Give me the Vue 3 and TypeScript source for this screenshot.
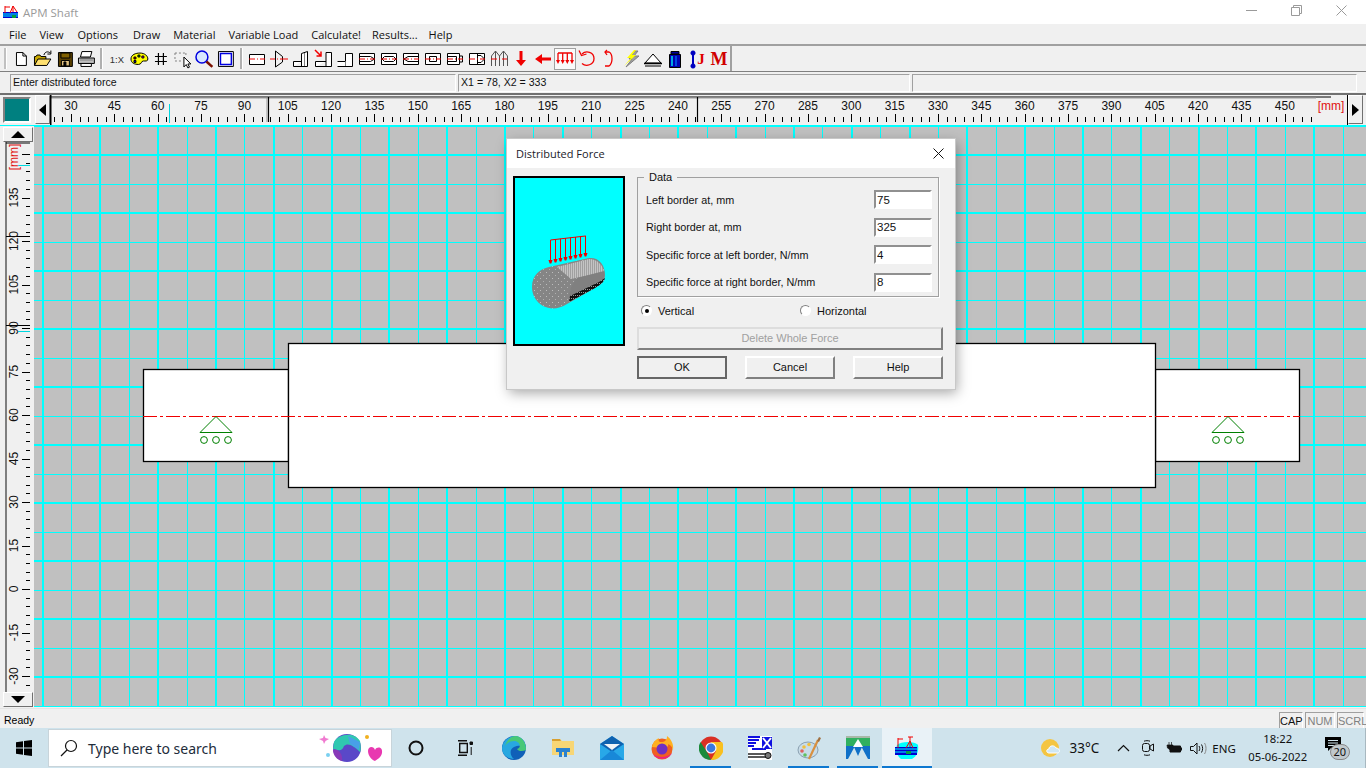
<script setup lang="ts">
type Shape = [string, string?, string?, number?]
interface Tool {
  id: string
  shapes?: Shape[]
  label?: { text: string; color: string; family: string; size: number; x: number; y: number; weight?: string }
  pressed?: boolean
}

const menus = ['File', 'View', 'Options', 'Draw', 'Material', 'Variable Load', 'Calculate!', 'Results...', 'Help']

const K = '#000'
const R = '#f00000'
const G = '#808080'

const fileTools: Tool[] = [
  { id: 'new', shapes: [['M6.5 4.5H13L16.5 8V17.5H6.5Z', K, '#fff'], ['M13 4.5V8H16.5', K]] },
  { id: 'open', shapes: [['M2.5 17.5V8.5H4L5 7H8L9 8.5H14V11', K, '#c8a800'], ['M2.5 17.5L6 11H19L15 17.5Z', K, '#ffe070'], ['M12 7C13 3.5 16 3 18.5 5', K], ['M19 2.5V6H15.5', K]] },
  { id: 'save', shapes: [['M4.5 4.5H18.5V18.5H4.5Z', K, '#5a4000'], ['M7 5H16V10H7Z', K, '#806000'], ['M7.5 12.5H15.5V18H7.5Z', K, '#e0c080'], ['M10 14H12V18H10Z', K, K]] },
  { id: 'print', shapes: [['M7 3.5H17L15.5 9H5.5Z', K, '#fff'], ['M3.5 10H19.5V15.5H3.5Z', K, '#c0c0c0'], ['M6 15.5H16.5V18.5H6Z', K, '#fff'], ['M5 12H18', G]] },
]
const viewTools: Tool[] = [
  { id: 'scale', label: { text: '1:X', color: '#333', family: 'Liberation Sans', size: 9.5, x: 11, y: 15, weight: 'normal' } },
  { id: 'palette', shapes: [['M3 11C3 6.5 8 5 12 5C17 5 20 8 20 11C20 13.5 17.5 13 15.5 13C13 13 14 16.5 10.5 16.5C6.5 16.5 3 15 3 11Z', K, '#ffff00'], ['M6 9h2v2h-2z', K, '#f00000'], ['M10 7h2v2h-2z', K, '#00a000'], ['M14 8h2v2h-2z', K, '#f000f0'], ['M6 12.5h2v2h-2z', K, '#0000f0']] },
  { id: 'grid', shapes: [['M8.5 5V17M13.5 5V17M5 8.5H17M5 13.5H17', K, undefined, 1.2]] },
  { id: 'select', shapes: [['M3 5h2M7 5h2M11 5h2M3 5v2M3 9v2M3 13h2M7 13h2M14 5v2', G], ['M12 9V19L14.3 16.6L16 20L17.6 19.2L16 16H19Z', K, '#fff']] },
  { id: 'zoom', shapes: [['M15 9a6 6 0 1 0 -12 0a6 6 0 1 0 12 0', '#0000e0', '#d8e8ff', 1.5], ['M13.5 13.5L19.5 19', '#7a1000', undefined, 2.5]] },
  { id: 'frame', shapes: [['M3.5 3.5H18.5V18.5H3.5Z', K, '#fff'], ['M5.5 5.5H16.5V16.5H5.5Z', '#0000e0', '#fff', 1.5]] },
]
const center = 'M3 11H9M11 11H12M14 11H19'
const shaftTools: Tool[] = [
  { id: 'cyl', shapes: [['M3.5 6.5H18.5V16.5H3.5Z', K, '#fff'], [center, R]] },
  { id: 'cone', shapes: [['M7.5 3V19M7.5 3L14.5 8.5V14L7.5 19', K], ['M2 11H7M9 11H10M12 11H20', R]] },
  { id: 'stepL', shapes: [['M3.5 18.5V13.5H11.5M11.5 18.5V5.5L17.5 3.5V18.5H3.5', K, '#fff'], ['M14.5 5V18', G]] },
  { id: 'stepArrow', shapes: [['M3.5 18.5V13.5H14M3.5 18.5H19.5V4.5H14V18', K, '#fff'], ['M3 2L9 8M9 3.5V8H4.5', R, undefined, 1.5]] },
  { id: 'stepR', shapes: [['M3.5 13.5H11.5V5.5H18.5V18.5H3.5', K, '#fff'], ['M11.5 13.5V18', G]] },
  { id: 'keyIn', shapes: [['M3.5 5.5H18.5V16.5H3.5Z', K, '#fff'], ['M3.5 8.5H14.5L18.5 11L14.5 13.5H3.5', K], [center, R]] },
  { id: 'keyOut', shapes: [['M3.5 5.5H18.5V16.5H3.5Z', K, '#fff'], ['M6.5 8.5H15.5L18 11L15.5 13.5H6.5L4 11Z', K], [center, R]] },
  { id: 'keyLeft', shapes: [['M3.5 5.5H18.5V16.5H3.5Z', K, '#fff'], ['M18.5 8.5H8L4 11L8 13.5H18.5', K], [center, R]] },
  { id: 'keyBox', shapes: [['M3.5 5.5H18.5V16.5H3.5Z', K, '#fff'], ['M7.5 8.5H14.5V13.5H7.5Z', K], [center, R]] },
  { id: 'groove', shapes: [['M3.5 5.5H15.5V16.5H3.5Z', K, '#fff'], ['M3.5 8.5H12.5V13.5H3.5M15.5 8H18.5V14H15.5', K], [center, R]] },
  { id: 'end', shapes: [['M3.5 5.5H18.5V16.5H3.5Z', K, '#fff'], ['M11.5 5.5V16.5M11.5 7.5H15L18.5 11L15 14.5H11.5', K], [center, R]] },
  { id: 'spline', shapes: [['M3.5 18V8L7.5 3L11.5 8V18M11.5 8L15.5 3L19.5 8V18M7.5 3V18M15.5 3V18', '#555'], [center, R]] },
  { id: 'force', shapes: [['M9.5 3H12.5V12H16L11 18L6 12H9.5Z', undefined, R]] },
  { id: 'forceH', shapes: [['M19 9.5V12.5H10V16L3 11L10 6V9.5Z', undefined, R]] },
  { id: 'dist', pressed: true, shapes: [['M4 5H18M4 5V13M8.7 5V13M13.3 5V13M18 5V13', R, undefined, 1.3], ['M2 12h4l-2 4zM6.7 12h4l-2 4zM11.3 12h4l-2 4zM16 12h4l-2 4z', undefined, R]] },
  { id: 'moment', shapes: [['M6 6C10 2 18 4 18 10.5C18 17 10 19 6 15.5', R, undefined, 1.3], ['M3 2.5L5.5 7.5L10.5 6', R, undefined, 1.3]] },
  { id: 'momentH', shapes: [['M7 4H11C15 6 15 15 11 18H7', R, undefined, 1.3], ['M9 2L7 4L9 7', R, undefined, 1.3]] },
  { id: 'bolt', shapes: [['M15 3L9 11H12L6 19L19 8H14L18 3Z', G, '#a0a0a0'], ['M14 2L7 10H11L4 18L16 7H12L16 2Z', undefined, '#ffff00']] },
  { id: 'support', shapes: [['M3 15L11 6L19 15Z', K, '#fff'], ['M2 15.5H20', K, undefined, 1.5], ['M3 18H19', K, undefined, 1]] },
  { id: 'mass', shapes: [['M7 3.5H15V6H7Z', K, '#0000a0'], ['M5.5 6.5H16.5V19.5H5.5Z', K, '#0000b0'], ['M8 8V18', '#00e0f0', undefined, 1.5], ['M12 8V18', '#0060f0', undefined, 1.5]] },
  { id: 'inertia', shapes: [['M7 5V18', '#0000c0', undefined, 2], ['M7 2.5a2.5 2.5 0 1 0 .01 0M7 15.5a2.5 2.5 0 1 0 .01 0', undefined, '#0000c0']], label: { text: 'J', color: '#e00000', family: 'Liberation Serif', size: 15, x: 15, y: 16 } },
  { id: 'torque', label: { text: 'M', color: '#d00000', family: 'Liberation Serif', size: 18, x: 11, y: 17 } },
]

const x = (mm: number) => 71 + (mm - 30) * 2.89
const y = (mm: number) => 589 - mm * 2.9

const hTicks = Array.from({ length: 146 }, (_, i) => 24 + i * 3).map((mm) => ({ pos: x(mm), long: mm % 15 === 0 }))
const hLabels = Array.from({ length: 29 }, (_, i) => 30 + i * 15).map((mm) => ({ text: String(mm), pos: x(mm) }))
const vTicks = Array.from({ length: 65 }, (_, i) => -42 + i * 3).map((mm) => ({ pos: y(mm), long: mm % 15 === 0 }))
const vLabels = Array.from({ length: 12 }, (_, i) => -30 + i * 15).map((mm) => ({ text: String(mm), pos: y(mm) }))

// heavy line every second one, snapped so the thin ones stay one pixel wide
const snap = (pos: number, heavy: boolean) => (heavy ? Math.round(pos) : Math.floor(pos) + 0.5)
const gridX = Array.from({ length: 47 }, (_, i) => ({ pos: snap(42.5 + i * 28.9, i % 2 === 0), heavy: i % 2 === 0 }))
const gridY = Array.from({ length: 21 }, (_, i) => ({ pos: snap(126 + i * 29, i % 2 === 1), heavy: i % 2 === 1 }))

const supports = [216, 1228]

const fields = [
  { label: 'Left border at, mm', value: '75' },
  { label: 'Right border at, mm', value: '325' },
  { label: 'Specific force at left border, N/mm', value: '4' },
  { label: 'Specific force at right border, N/mm', value: '8' },
]

const arrows = [41.5, 46.5, 51.5, 56.5, 61.5, 66.5, 71.5, 76.5]
</script>

<template>
  <div class="app">
    <header class="titlebar">
      <svg class="app-icon" width="17" height="17" viewBox="0 0 17 17">
        <path d="M1 8H16V14H1Z" fill="#0000d0" />
        <path d="M1 10H16M1 12H16" stroke="#00ffff" />
        <path d="M3 2V9M3 3H8M11 2V8M11 2L8 9M11 2L15 8" stroke="#f00000" fill="none" />
        <path d="M10 11h4v3h-4z" fill="#00a040" />
      </svg>
      <span class="app-name">APM Shaft</span>
      <div class="win-controls">
        <svg width="11" height="11" viewBox="0 0 11 11"><path d="M0 5.5H11" stroke="#9a9a9a" /></svg>
        <svg width="11" height="11" viewBox="0 0 11 11"><path d="M.5 2.5H8.5V10.5H.5ZM2.5 2.5V.5H10.5V8.5H8.5" stroke="#9a9a9a" fill="none" /></svg>
        <svg width="11" height="11" viewBox="0 0 11 11"><path d="M.5 .5L10.5 10.5M10.5 .5L.5 10.5" stroke="#9a9a9a" fill="none" /></svg>
      </div>
    </header>

    <nav class="menubar">
      <span v-for="m in menus" :key="m">{{ m }}</span>
    </nav>

    <div class="toolrow">
      <div class="toolbar">
        <span class="gripper"></span>
        <template v-for="(group, gi) in [fileTools, viewTools, shaftTools]" :key="gi">
          <span v-if="gi > 0" class="sep"></span>
          <div :class="['tool-group', { 'tool-group--wide': gi === 2 }]">
            <span v-for="t in group" :key="t.id" :class="['tool', { 'tool--pressed': t.pressed }]">
              <svg width="22" height="22" viewBox="0 0 22 22">
                <path
                  v-for="(s, i) in t.shapes"
                  :key="i"
                  :d="s[0]"
                  :stroke="s[1] || 'none'"
                  :fill="s[2] || 'none'"
                  :stroke-width="s[3] || 1"
                />
                <text
                  v-if="t.label"
                  :x="t.label.x"
                  :y="t.label.y"
                  :fill="t.label.color"
                  :font-family="t.label.family"
                  :font-size="t.label.size"
                  :font-weight="t.label.weight || 'bold'"
                  text-anchor="middle"
                >{{ t.label.text }}</text>
              </svg>
            </span>
          </div>
        </template>
      </div>
    </div>

    <div class="hintbar">
      <span class="hint hint--a">Enter distributed force</span>
      <span class="hint hint--b">X1 = 78, X2 = 333</span>
      <span class="hint hint--c"></span>
    </div>

    <div class="ruler-row">
      <div class="swatch-cell"><span class="swatch"></span></div>
      <button class="arrow-btn arrow-btn--h"><span class="tri tri--left"></span></button>
      <svg class="ruler-h" width="1298" height="30" viewBox="50 95 1298 30">
        <path d="M50 97H1331" stroke="#000" stroke-width="1" />
        <path d="M50 98H1316" stroke="#999" stroke-width="1" />
        <path d="M50.5 95V125" stroke="#000" stroke-width="2" />
        <path d="M1347.5 95V125" stroke="#000" />
        <path d="M268.5 97V122M697.5 97V122" stroke="#000" stroke-width="1.2" />
        <path d="M267 98V122" stroke="#999" />
        <path d="M169.5 104V123" stroke="#00d8e0" />
        <path
          v-for="t in hTicks"
          :key="t.pos"
          :d="`M${Math.round(t.pos) + 0.5} ${t.long ? 114 : 117}V122`"
          stroke="#000"
        />
        <text v-for="l in hLabels" :key="l.text" :x="l.pos" y="110" class="ruler-text" text-anchor="middle">{{ l.text }}</text>
        <text x="1331" y="110" class="ruler-text ruler-text--unit" text-anchor="middle">[mm]</text>
      </svg>
      <button class="arrow-btn arrow-btn--h"><span class="tri tri--right"></span></button>
    </div>

    <main class="work">
      <aside class="ruler-col">
        <button class="arrow-btn arrow-btn--v"><span class="tri tri--up"></span></button>
        <svg class="ruler-v" width="30" height="550" viewBox="3 142 30 550">
          <path d="M6 142V692" stroke="#333" stroke-width="1.2" />
          <path d="M6 143H30" stroke="#000" />
          <path d="M6 236.5H30M6 325.5H30" stroke="#000" stroke-width="1.2" />
          <path d="M18 165.5H30M18 331.5H30" stroke="#00d8e0" />
          <path
            v-for="t in vTicks"
            :key="t.pos"
            :d="`M${t.long ? 22 : 26} ${Math.round(t.pos) + 0.5}H30`"
            stroke="#000"
          />
          <text
            v-for="l in vLabels"
            :key="l.text"
            class="ruler-text"
            text-anchor="middle"
            :transform="`translate(18 ${l.pos}) rotate(-90)`"
          >{{ l.text }}</text>
          <text class="ruler-text ruler-text--unit" text-anchor="middle" transform="translate(18 157) rotate(-90)">[mm]</text>
        </svg>
        <button class="arrow-btn arrow-btn--v"><span class="tri tri--down"></span></button>
      </aside>

      <div class="canvas">
        <svg width="1332" height="581" viewBox="34 126 1332 581">
          <rect x="34" y="126" width="1332" height="581" fill="#c0c0c0" />
          <path
            v-for="g in gridX"
            :key="'x' + g.pos"
            :d="`M${g.pos} 126V707`"
            stroke="#00ffff"
            :stroke-width="g.heavy ? 2 : 1"
          />
          <path
            v-for="g in gridY"
            :key="'y' + g.pos"
            :d="`M34 ${g.pos}H1366`"
            stroke="#00ffff"
            :stroke-width="g.heavy ? 2 : 1"
          />
          <rect x="143.5" y="369.5" width="145" height="92" fill="#fff" stroke="#000" stroke-width="1.3" />
          <rect x="1155.5" y="369.5" width="144" height="92" fill="#fff" stroke="#000" stroke-width="1.3" />
          <rect x="288.5" y="343.5" width="867" height="144" fill="#fff" stroke="#000" stroke-width="1.3" />
          <path d="M143 416.5H1300" stroke="#f00000" stroke-width="1.1" stroke-dasharray="14 3 3 3" />
          <g v-for="s in supports" :key="s" stroke="#008000" fill="none">
            <path :d="`M${s} 416.5L${s - 16} 432.5H${s + 16}Z`" />
            <circle :cx="s - 12" cy="440" r="3.4" />
            <circle :cx="s" cy="440" r="3.4" />
            <circle :cx="s + 12" cy="440" r="3.4" />
          </g>
        </svg>

        <section class="dialog">
          <div class="dialog-title">
            <span>Distributed Force</span>
            <svg width="11" height="11" viewBox="0 0 11 11"><path d="M.5 .5L10.5 10.5M10.5 .5L.5 10.5" stroke="#111" fill="none" /></svg>
          </div>
          <div class="dialog-body">
            <div class="preview">
              <svg width="108" height="166" viewBox="6 3 108 166">
                <defs>
                  <pattern id="speck" width="6" height="6" patternUnits="userSpaceOnUse">
                    <rect width="6" height="6" fill="#858585" />
                    <rect x="1" y="1" width="1" height="1" fill="#bdbdbd" />
                    <rect x="4" y="4" width="1" height="1" fill="#b0b0b0" />
                  </pattern>
                  <pattern id="light" width="2" height="2" patternUnits="userSpaceOnUse">
                    <rect width="2" height="2" fill="#a0a0a0" />
                    <rect width="1" height="2" fill="#c4c4c4" />
                  </pattern>
                  <pattern id="dark" width="2" height="3" patternUnits="userSpaceOnUse">
                    <rect width="2" height="3" fill="#111" />
                    <rect width="1" height="1" fill="#999" />
                  </pattern>
                </defs>
                <path d="M23 112C23 100 31 94 40 92L80 83C90 82 96 90 96 100C96 106 92 110 86 113L58 129C50 134 42 135 34 131C27 127 23 120 23 112Z" fill="url(#speck)" />
                <path d="M48 92L80 84C88 84 94 90 95 97L62 104Z" fill="url(#light)" />
                <path d="M68 103L95 96C96 100 94 104 92 106L60 122C60 115 64 108 68 103Z" fill="#808080" />
                <path d="M96 103C95 107 91 110 86 113L60 127L61 121L90 107Z" fill="url(#dark)" />
                <path d="M41.5 65L76.5 61V78" stroke="#f00000" fill="none" />
                <path
                  v-for="(a, i) in arrows"
                  :key="a"
                  :d="`M${a} ${65 - i * 0.6}V${86 - i}`"
                  stroke="#f00000"
                />
                <path
                  v-for="(a, i) in arrows"
                  :key="'h' + a"
                  :d="`M${a - 2} ${85 - i}H${a + 2}L${a + 0.8} ${88.5 - i}H${a - 0.8}Z`"
                  fill="#f00000"
                />
              </svg>
            </div>
            <div class="dialog-main">
              <fieldset class="group">
                <legend>Data</legend>
                <label v-for="f in fields" :key="f.label" class="field">
                  <span>{{ f.label }}</span>
                  <input :value="f.value" readonly />
                </label>
              </fieldset>
              <div class="radios">
                <span class="radio radio--on"><i></i>Vertical</span>
                <span class="radio"><i></i>Horizontal</span>
              </div>
              <button class="btn btn--wide" disabled>Delete Whole Force</button>
              <div class="btn-row">
                <button class="btn btn--default">OK</button>
                <button class="btn">Cancel</button>
                <button class="btn">Help</button>
              </div>
            </div>
          </div>
        </section>
      </div>
    </main>

    <footer class="statusbar">
      <span class="ready">Ready</span>
      <div class="locks">
        <span class="lock lock--on cap">CAP</span>
        <span class="lock num">NUM</span>
        <span class="lock scrl">SCRL</span>
      </div>
    </footer>

    <div class="taskbar">
      <div class="start">
        <svg width="16" height="16" viewBox="0 0 16 16"><path d="M0 2.2L7 1.2V7.5H0ZM8 1L16 0V7.5H8ZM0 8.5H7V14.8L0 13.8ZM8 8.5H16V16L8 15Z" fill="#000" /></svg>
      </div>
      <div class="search">
        <svg width="18" height="18" viewBox="0 0 18 18"><circle cx="11" cy="7" r="5.5" fill="none" stroke="#111" stroke-width="1.2" /><path d="M7 11L1 17" stroke="#111" stroke-width="1.3" /></svg>
        <span class="search-text">Type here to search</span>
        <svg class="search-art" width="66" height="32" viewBox="0 0 66 32">
          <path d="M6 3L7.5 6L11 7L7.5 9L6 12L5 9L1 7L5 6Z" fill="#f07ad0" />
          <circle cx="10" cy="23" r="2" fill="#7ad0f0" />
          <circle cx="49" cy="5" r="2" fill="#f0b020" />
          <circle cx="29" cy="16" r="14" fill="#5a48c8" />
          <path d="M16 10C20 2 36 -1 42 9C43 15 43 18 42 20C36 14 30 10 26 14C24 20 20 18 15 17Z" fill="#30c8b0" />
          <path d="M15 18C20 16 25 22 24 29C19 28 15 23 15 18Z" fill="#8838b8" />
          <path d="M30 4L42 10L41 18L32 12Z" fill="#48a0e8" />
          <path d="M50 19C50 14 56 14 57 18C59 14 65 15 64 21C63 26 58 28 57 29C54 28 50 24 50 19Z" fill="#e838b0" />
        </svg>
      </div>
      <div class="slot">
        <svg width="16" height="16" viewBox="0 0 16 16"><circle cx="8" cy="8" r="6.5" fill="none" stroke="#111" stroke-width="2" /></svg>
      </div>
      <div class="slot">
        <svg width="16" height="16" viewBox="0 0 16 16"><path d="M1 .7H10M1 15.3H10M2.7 3.5H10.3V12.5H2.7Z" fill="none" stroke="#111" stroke-width="1.4" /><path d="M13 2h2.5v2.5h-2.5zM14.2 7v8" fill="#111" stroke="#111" /></svg>
      </div>
      <div class="slot">
        <svg width="24" height="24" viewBox="0 0 24 24">
          <circle cx="12" cy="12" r="12" fill="#1060b8" />
          <path d="M0 12C1 3 9 0 14 0C20 1 24 6 24 13C22 9 16 9 12 11C7 13 8 20 12 23C5 23 0 18 0 12Z" fill="#28a8e0" />
          <path d="M14 0C20 1 24 6 24 14C20 16 16 15 15 13C20 12 18 5 12 5C8 5 5 7 3 10C5 4 9 0 14 0Z" fill="#48c878" />
        </svg>
      </div>
      <div class="slot">
        <svg width="22" height="18" viewBox="0 0 22 18">
          <path d="M0 0H8L10 2H22V16H0Z" fill="#f7d675" />
          <path d="M0 0H8L9 2H0Z" fill="#d8a030" />
          <path d="M4 9H18V13H15V18H12V13H10V18H7V13H4Z" fill="#2a82d0" />
        </svg>
      </div>
      <div class="slot">
        <svg width="24" height="24" viewBox="0 0 24 24">
          <path d="M0 8L12 0L24 8V24H0Z" fill="#28a8e8" />
          <path d="M0 8L12 0L24 8L12 16Z" fill="#0f62b0" />
          <path d="M4 8L20 8L12 14Z" fill="#f0f4f8" />
          <path d="M0 24L12 14L24 24Z" fill="#1888d8" />
        </svg>
      </div>
      <div class="slot">
        <svg width="24" height="24" viewBox="0 0 24 24">
          <circle cx="12" cy="13" r="10.5" fill="#f06020" />
          <path d="M2 11C3 5 7 3 9 2C8 5 9 6 11 6C15 6 17 4 17 0C21 3 24 8 23 14C22 10 20 9 18 8C19 11 16 12 12 12Z" fill="#ffb020" />
          <circle cx="12" cy="13" r="5.5" fill="#7030c0" />
          <path d="M3 18C6 24 18 25 22 17C17 22 8 22 3 18Z" fill="#f02080" />
        </svg>
      </div>
      <div class="slot slot--on">
        <svg width="24" height="24" viewBox="0 0 24 24">
          <circle cx="12" cy="12" r="11.5" fill="#d93025" />
          <path d="M12 24A12 12 0 0 1 1.5 6L8 16Z" fill="#1a8a3a" />
          <path d="M12 6H23A12 12 0 0 1 12 24L17 15Z" fill="#f9c020" />
          <circle cx="12" cy="12" r="5.5" fill="#fff" />
          <circle cx="12" cy="12" r="4.4" fill="#3a78e0" />
        </svg>
      </div>
      <div class="slot">
        <svg width="24" height="24" viewBox="0 0 24 24">
          <rect width="24" height="15" fill="#fff" />
          <path d="M0 1H12M0 4H11M0 7H8M0 10H6M4 13H18" stroke="#1010e0" stroke-width="1.8" />
          <path d="M14 1H24V13H14Z" fill="#1010e0" />
          <path d="M15 2L23 12M23 2L15 12" stroke="#fff" stroke-width="2" />
          <rect y="15" width="24" height="9" fill="#fff" />
          <path d="M0 18H18M0 21H18" stroke="#222" stroke-width="1.4" />
          <circle cx="20" cy="19.5" r="3" fill="#777" stroke="#111" />
        </svg>
      </div>
      <div class="slot slot--on">
        <svg width="24" height="24" viewBox="0 0 24 24">
          <ellipse cx="11" cy="14" rx="10" ry="8" fill="#c8dce8" stroke="#8aa0b0" />
          <circle cx="7" cy="11" r="1.8" fill="#f0c040" />
          <circle cx="12" cy="8.5" r="1.8" fill="#f0c040" />
          <circle cx="5" cy="15" r="1.8" fill="#e06060" />
          <circle cx="8" cy="19" r="1.8" fill="#60c060" />
          <path d="M12 23L21 4" stroke="#d89040" stroke-width="2.2" />
          <path d="M20 5L22 1L24 2L22 6Z" fill="#a07040" />
        </svg>
      </div>
      <div class="slot slot--on">
        <svg width="24" height="24" viewBox="0 0 24 24">
          <rect width="24" height="2" fill="#a8b8a8" />
          <path d="M0 2H24V10H0Z" fill="#30b060" />
          <path d="M0 10H9L2 23H0ZM8 11H16L12 20ZM15 10H24V23H22Z" fill="#1070c8" />
          <path d="M12 3L17 11H7Z" fill="#fff" />
        </svg>
      </div>
      <div class="slot slot--on slot--active">
        <svg width="24" height="24" viewBox="0 0 24 24">
          <path d="M2 9C6 5 20 5 23 9C24 15 22 20 17 23H6C2 20 0 14 2 9Z" fill="#00ffff" />
          <rect x="0" y="11" width="22" height="8" fill="#0000d0" />
          <path d="M0 13H22M0 16H22" stroke="#00ffff" />
          <path d="M3 2V12M3 3H8M15 1V11M15 5L11 12M15 5L18 12M13 1H18" stroke="#f00000" fill="none" />
          <path d="M11 15h5v3h-5z" fill="#00a040" />
        </svg>
      </div>

      <div class="tray">
        <svg class="tray-weather" width="20" height="20" viewBox="0 0 20 20">
          <circle cx="9" cy="10" r="9" fill="#f4c542" />
          <path d="M8 15C5 15 5 11 8 11C8 7 14 7 15 10C19 10 20 15 16 15Z" fill="#cfe7f5" stroke="#fff" />
        </svg>
        <span class="temp">33°C</span>
        <svg class="tray-caret" width="13" height="8" viewBox="0 0 13 8"><path d="M1 7L6.5 1.5L12 7" fill="none" stroke="#111" stroke-width="1.2" /></svg>
        <svg class="tray-meet" width="12" height="16" viewBox="0 0 12 16"><rect x=".5" y="3.5" width="7" height="8" rx="2" fill="none" stroke="#111" /><path d="M8 6L11.5 4V11L8 9Z" fill="none" stroke="#111" /><path d="M2 1.2C4 .5 6 .5 8 1.2M2 14.8C4 15.5 6 15.5 8 14.8" fill="none" stroke="#111" /></svg>
        <svg class="tray-battery" width="16" height="12" viewBox="0 0 16 12"><path d="M3 0V3M5.5 0V3M1 3H7V6L4.5 8L1.5 6Z" fill="#111" stroke="#111" stroke-width=".7" /><path d="M4 4H14.5V10H4Z" fill="#111" stroke="#111" /><path d="M15 5.5H16V8.5H15Z" fill="#111" /></svg>
        <svg class="tray-volume" width="17" height="13" viewBox="0 0 17 13"><path d="M.5 4.5H3.5L7 1V12L3.5 8.5H.5Z" fill="none" stroke="#111" /><path d="M9 4C10 5.5 10 7.5 9 9M11.5 2.5C13 5 13 8 11.5 10.5" fill="none" stroke="#111" /><path d="M14.5 1C16.5 4 16.5 9 14.5 12" fill="none" stroke="#888" /></svg>
        <span class="lang">ENG</span>
        <div class="clock"><span>18:22</span><span>05-06-2022</span></div>
        <div class="notify">
          <svg width="16" height="14" viewBox="0 0 16 14"><path d="M0 0H16V11H6L3 14V11H0Z" fill="#000" /><path d="M3 3.5H13M3 6H13M3 8.5H10" stroke="#cfe3ec" /></svg>
          <span class="badge">20</span>
        </div>
      </div>
    </div>
  </div>
</template>

<style scoped>
.app {
  width: 1366px;
  height: 768px;
  display: flex;
  flex-direction: column;
  overflow: hidden;
  background: #f0f0f0;
  font-family: "Liberation Sans", Arial, sans-serif;
  color: #000;
}

/* ── Title bar ─────────────────────────────────────────────────────── */
.titlebar {
  height: 24px;
  flex-shrink: 0;
  background: #fff;
  display: flex;
  align-items: center;
  padding-left: 2px;
}

.app-icon {
  margin-right: 4px;
}

.app-name {
  font-family: "Open Sans", sans-serif;
  font-size: 11.5px;
  color: #9a9a9a;
}

.win-controls {
  margin-left: auto;
  display: flex;
  gap: 34px;
  padding-right: 19px;
  margin-top: -4px;
}

/* ── Menu ──────────────────────────────────────────────────────────── */
.menubar {
  height: 22px;
  flex-shrink: 0;
  display: flex;
  align-items: center;
  gap: 13px;
  padding-left: 9px;
  box-sizing: border-box;
  border-bottom: 2px solid #a0a0a0;
  font-family: "Open Sans", sans-serif;
  font-size: 11px;
  color: #111;
}

.menubar span:nth-child(3) {
  margin-left: 1px;
}

.menubar span:nth-child(4) {
  margin-left: 2px;
}

.menubar span:nth-child(8),
.menubar span:nth-child(9) {
  margin-left: -2px;
}

/* ── Toolbar ───────────────────────────────────────────────────────── */
.toolrow {
  height: 26px;
  flex-shrink: 0;
  box-sizing: border-box;
  border-bottom: 1px solid #808080;
}

.toolbar {
  width: 732px;
  height: 25px;
  box-sizing: border-box;
  display: flex;
  align-items: center;
  border-right: 2px solid #a0a0a0;
  position: relative;
}

.gripper {
  width: 2px;
  height: 21px;
  margin-left: 4px;
  margin-right: 3px;
  background: #c0c0c0;
  border-right: 1px solid #fff;
}

.tool-group {
  display: flex;
}

.tool {
  width: 21.85px;
  height: 22px;
  display: flex;
  justify-content: center;
  align-items: center;
  box-sizing: border-box;
}

.tool-group--wide .tool {
  width: 22px;
}

.tool--pressed {
  background: #fafafa;
  outline: 1px solid #a0a0a0;
  outline-offset: -1px;
}

.sep {
  width: 2px;
  height: 21px;
  margin: 0 3px 0 3px;
  background: #b0b0b0;
  border-right: 1px solid #fff;
}

/* ── Hint row ──────────────────────────────────────────────────────── */
.hintbar {
  height: 23px;
  flex-shrink: 0;
  box-sizing: border-box;
  display: flex;
  align-items: center;
  gap: 2px;
  padding-left: 10px;
  padding-top: 1px;
  border-bottom: 2px solid #707070;
  font-size: 10.6px;
  color: #111;
}

.hint {
  height: 18px;
  box-sizing: border-box;
  padding-left: 2px;
  line-height: 15px;
  border: 1px solid;
  border-color: #a0a0a0 #fff #fff #a0a0a0;
}

.hint--a {
  width: 446px;
}

.hint--b {
  width: 452px;
}

.hint--c {
  width: 445px;
}

/* ── Rulers ────────────────────────────────────────────────────────── */
.ruler-row {
  height: 31px;
  flex-shrink: 0;
  display: flex;
  align-items: flex-start;
  border-bottom: 1px solid #00ffff;
  box-sizing: border-box;
}

.swatch-cell {
  width: 35px;
  height: 30px;
  display: flex;
  justify-content: center;
  align-items: center;
  padding-right: 2px;
  box-sizing: border-box;
}

.swatch {
  width: 28px;
  height: 26px;
  box-sizing: border-box;
  background: #008080;
  border: 2px solid;
  border-color: #808080 #fff #fff #808080;
}

.arrow-btn {
  padding: 0;
  background: #f0f0f0;
  border: 1px solid;
  border-color: #fff #707070 #707070 #fff;
  display: flex;
  justify-content: center;
  align-items: center;
  box-sizing: border-box;
}

.arrow-btn--h {
  width: 15px;
  height: 29px;
  flex-shrink: 0;
}

.arrow-btn--v {
  width: 30px;
  height: 15px;
  flex-shrink: 0;
}

.tri {
  width: 0;
  height: 0;
  border-style: solid;
  border-color: transparent;
}

.tri--left {
  border-width: 6px 7px 6px 0;
  border-right-color: #000;
}

.tri--right {
  border-width: 6px 0 6px 7px;
  border-left-color: #000;
}

.tri--up {
  border-width: 0 7px 7px 7px;
  border-bottom-color: #000;
}

.tri--down {
  border-width: 7px 7px 0 7px;
  border-top-color: #000;
}

.ruler-h,
.ruler-v {
  display: block;
  flex-shrink: 0;
}

.ruler-text {
  font-family: "Liberation Sans", Arial, sans-serif;
  font-size: 12px;
  fill: #111;
}

.ruler-text--unit {
  fill: #e01010;
}

.work {
  height: 582px;
  flex-shrink: 0;
  display: flex;
}

.ruler-col {
  width: 34px;
  flex-shrink: 0;
  box-sizing: border-box;
  padding: 1px 1px 0 3px;
  display: flex;
  flex-direction: column;
}

/* ── Canvas ────────────────────────────────────────────────────────── */
.canvas {
  position: relative;
  width: 1332px;
  height: 581px;
}

.canvas > svg {
  display: block;
}

/* ── Dialog ────────────────────────────────────────────────────────── */
.dialog {
  position: absolute;
  left: 473px;
  top: 13px;
  width: 448px;
  height: 250px;
  box-sizing: border-box;
  background: #f0f0f0;
  box-shadow: 0 0 0 1px #c8c8c8, 2px 4px 12px rgba(0, 0, 0, 0.35);
  font-size: 10.8px;
  color: #111;
}

.dialog-title {
  height: 29px;
  background: #fff;
  display: flex;
  align-items: center;
  justify-content: space-between;
  padding: 0 11px 0 9px;
  font-family: "Open Sans", sans-serif;
  font-size: 11px;
  color: #1a1a2a;
}

.dialog-body {
  display: flex;
  align-items: flex-start;
  padding-left: 6px;
}

.preview {
  width: 112px;
  height: 170px;
  margin-top: 8px;
  box-sizing: border-box;
  border: 2px solid #000;
  background: #00ffff;
  flex-shrink: 0;
}

.preview svg {
  display: block;
}

.dialog-main {
  width: 306px;
  margin-left: 12px;
  margin-top: 3px;
}

.group {
  width: 302px;
  box-sizing: border-box;
  margin: 0;
  padding: 7px 6px 4px 8px;
  border: 1px solid #a0a0a0;
  box-shadow: 1px 1px 0 #fff;
  display: flex;
  flex-direction: column;
  gap: 8.6px;
}

.group legend {
  padding: 0 5px;
  margin-left: -2px;
  line-height: 12px;
  font-size: 11px;
}

.field {
  height: 19px;
  display: flex;
  align-items: center;
  justify-content: space-between;
}

.field input {
  width: 58px;
  height: 19px;
  box-sizing: border-box;
  padding: 0 0 0 1px;
  margin: 0;
  outline: none;
  border: 2px solid;
  border-color: #909090 #fff #fff #909090;
  background: #fff;
  font: 11.5px "Liberation Sans", Arial, sans-serif;
  color: #111;
}

.radios {
  display: flex;
  align-items: center;
  height: 14px;
  margin-top: 7px;
  padding-left: 4px;
}

.radio {
  width: 159px;
  flex-shrink: 0;
  display: flex;
  align-items: center;
  gap: 6px;
  font-size: 11px;
}

.radio i {
  width: 11px;
  height: 11px;
  box-sizing: border-box;
  border-radius: 50%;
  border: 1.5px solid;
  border-color: #808080 #fff #fff #808080;
  background: #fff;
  display: flex;
  justify-content: center;
  align-items: center;
}

.radio--on i::before {
  content: "";
  width: 4px;
  height: 4px;
  border-radius: 50%;
  background: #000;
}

.btn {
  width: 90px;
  height: 23px;
  padding: 0;
  box-sizing: border-box;
  background: #f0f0f0;
  border: 2px solid;
  border-color: #fff #808080 #808080 #fff;
  font: 11px "Liberation Sans", Arial, sans-serif;
  color: #111;
}

.btn--wide {
  display: block;
  width: 306px;
  margin-top: 9px;
  color: #a0a0a0;
  border-top-color: #ddd;
  border-left-color: #ddd;
}

.btn--default {
  border-color: #666;
}

.btn-row {
  display: flex;
  gap: 18px;
  margin-top: 6px;
}

/* ── Status bar ────────────────────────────────────────────────────── */
.statusbar {
  height: 20px;
  flex-shrink: 0;
  display: flex;
  align-items: center;
  justify-content: space-between;
  padding: 2px 2px 0 4px;
  box-sizing: border-box;
  background: #f0f0f0;
  font-size: 10.5px;
  border-top: 1px solid #e4e4e4;
}

.locks {
  display: flex;
  gap: 2px;
  font-size: 11px;
  margin-top: 2px;
}

.lock {
  height: 17px;
  line-height: 16px;
  text-align: center;
  box-sizing: border-box;
  border: 1px solid;
  border-color: #a0a0a0 #fff #fff #a0a0a0;
  color: #808080;
}

.lock--on {
  color: #111;
}

.cap {
  width: 24px;
}

.num {
  width: 30px;
}

.scrl {
  width: 27px;
}

/* ── Taskbar ───────────────────────────────────────────────────────── */
.taskbar {
  height: 40px;
  flex-shrink: 0;
  display: flex;
  align-items: stretch;
  background: #cfe3ec;
}

.start {
  width: 48px;
  display: flex;
  justify-content: center;
  align-items: center;
}

.search {
  width: 343.5px;
  box-sizing: border-box;
  margin-top: 1px;
  margin-bottom: 1px;
  background: #fff;
  border: 1px solid #c8d4da;
  display: flex;
  align-items: center;
  padding-left: 11px;
  font-family: "Noto Sans", "Open Sans", sans-serif;
  font-size: 14px;
  color: #222c3a;
}

.search-text {
  margin-left: 10px;
}

.search-art {
  margin-left: auto;
  margin-right: 7px;
}

.slot {
  width: 49.1px;
  flex-shrink: 0;
  display: flex;
  justify-content: center;
  align-items: center;
  position: relative;
}

.slot--on::after {
  content: "";
  position: absolute;
  left: 4px;
  right: 4px;
  bottom: 0;
  height: 2px;
  background: #0e78d0;
}

.slot--active {
  background: #e9f2f7;
}

.slot--active::after {
  left: 0;
  right: 0;
}

.tray {
  flex: 1;
  display: flex;
  align-items: center;
  font-family: "Noto Sans", "Open Sans", sans-serif;
  font-size: 12px;
  color: #111;
  border-right: 1px solid #a8b8c0;
  box-sizing: border-box;
}

.tray-weather {
  margin-left: 109px;
}

.temp {
  margin-left: 9px;
  font-size: 13.5px;
}

.tray-caret {
  margin-left: 18px;
}

.tray-meet {
  margin-left: 12px;
}

.tray-battery {
  margin-left: 12px;
}

.tray-volume {
  margin-left: 8px;
}

.lang {
  margin-left: 5px;
  font-size: 11.5px;
}

.clock {
  width: 80px;
  margin-left: 2px;
  display: flex;
  flex-direction: column;
  align-items: center;
  line-height: 18px;
  font-size: 11.3px;
}

.notify {
  margin-left: 7px;
  position: relative;
  width: 28px;
  height: 24px;
}

.notify svg {
  display: block;
  margin-top: 1px;
}

.badge {
  position: absolute;
  left: 5px;
  top: 8px;
  width: 20px;
  height: 16px;
  box-sizing: border-box;
  border-radius: 8px;
  border: 1px solid #888;
  background: #c0c8cc;
  text-align: center;
  font-size: 11px;
  line-height: 14px;
}
</style>

<style>
body {
  overflow: hidden;
}
</style>
